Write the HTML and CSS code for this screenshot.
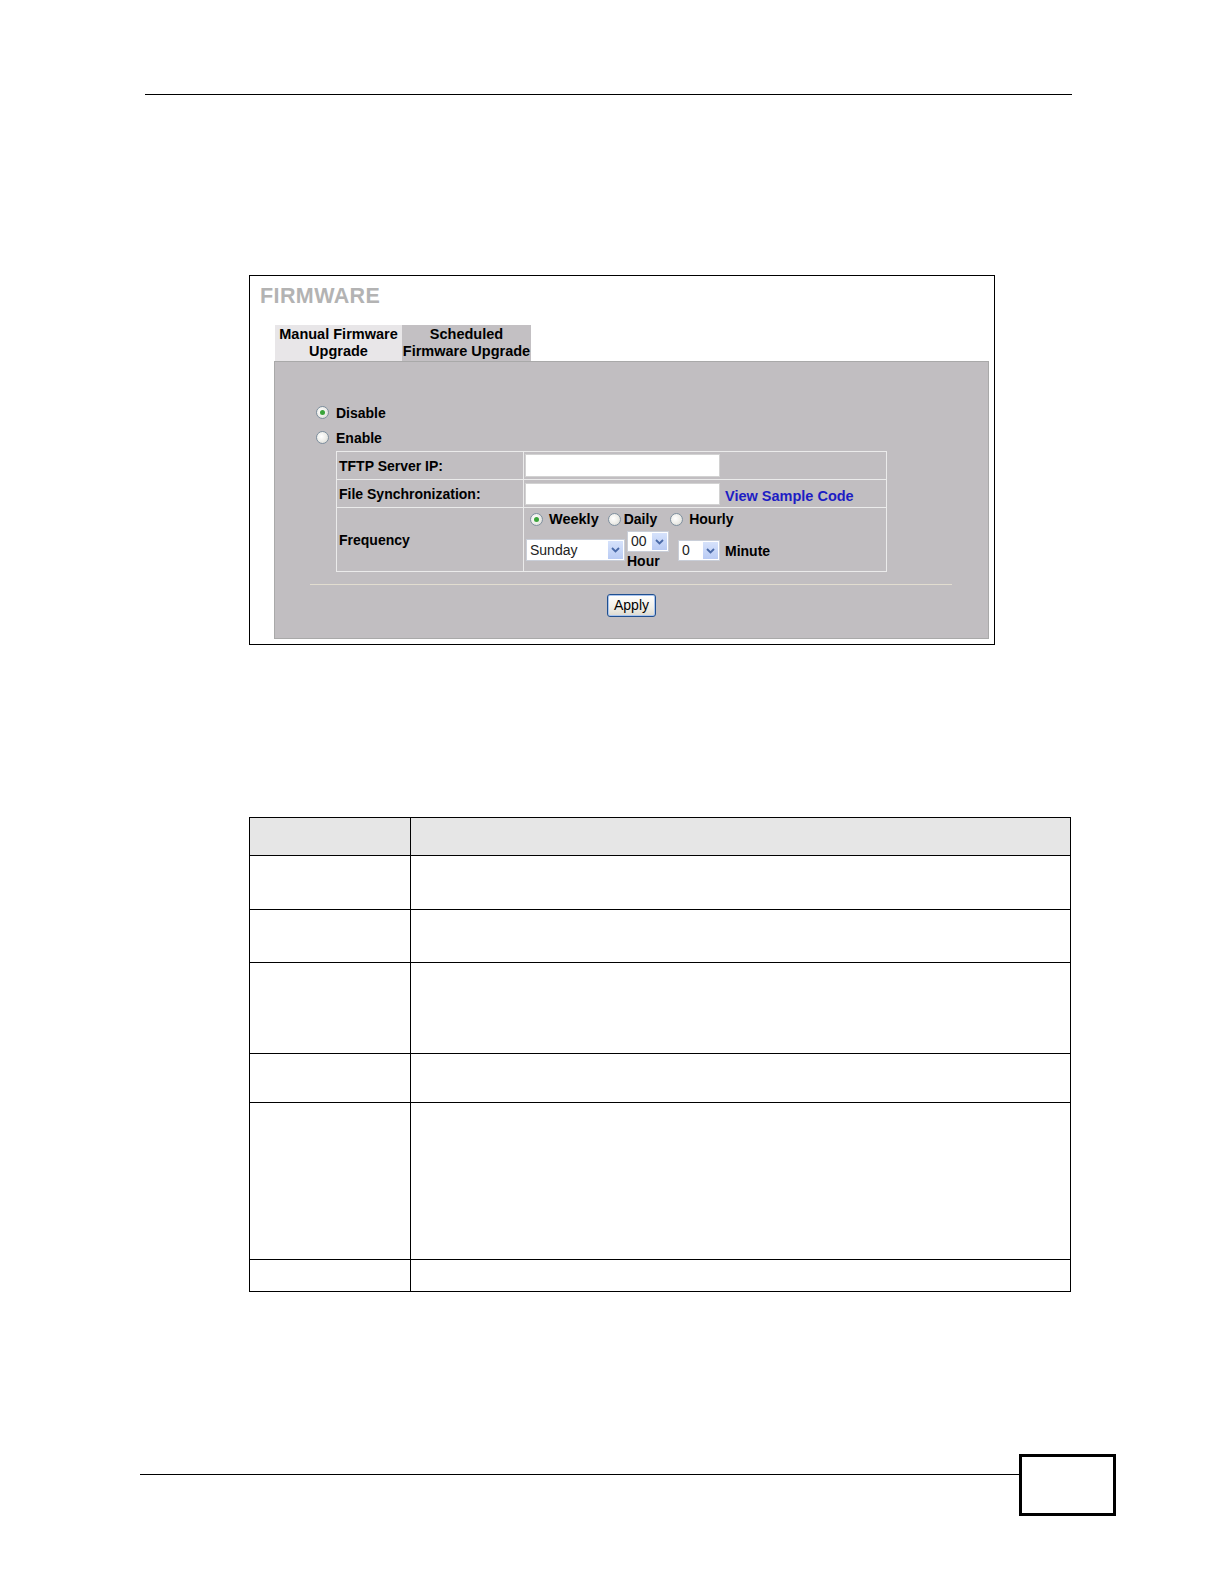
FILE: index.html
```html
<!DOCTYPE html>
<html>
<head>
<meta charset="utf-8">
<title>Firmware</title>
<link rel="stylesheet" href="styles.css">
</head>
<body>
<div class="page">
  <div class="top-rule"></div>

  <div class="shot">
    <div class="shot-title">FIRMWARE</div>
    <div class="tabs">
      <div class="tab tab-light">Manual Firmware<br>Upgrade</div>
      <div class="tab tab-dark">Scheduled<br>Firmware Upgrade</div>
    </div>
    <div class="panel">
      <div class="panel-body">
        <div class="radio-row"><span class="radio on"></span><span class="lbl">Disable</span></div>
        <div class="radio-row"><span class="radio"></span><span class="lbl">Enable</span></div>
        <table class="form">
          <tr class="r28">
            <td class="c1">TFTP Server IP:</td>
            <td class="c2"><div class="inp inp1"></div></td>
          </tr>
          <tr class="r28">
            <td class="c1">File Synchronization:</td>
            <td class="c2"><div class="inline"><div class="inp inp2"></div><span class="link">View Sample Code</span></div></td>
          </tr>
          <tr class="r64">
            <td class="c1">Frequency</td>
            <td class="c2 top">
              <div class="freq-radios">
                <span class="radio on"></span><span class="lbl w1">Weekly</span>
                <span class="radio"></span><span class="lbl w2">Daily</span>
                <span class="radio"></span><span class="lbl">Hourly</span>
              </div>
              <div class="freq-selects">
                <div class="sel sel-day">Sunday<span class="arr"><svg width="9" height="6" viewBox="0 0 9 6"><path d="M1 1 L4.5 4.5 L8 1" fill="none" stroke="#4a6aa8" stroke-width="1.8"/></svg></span></div>
                <div class="hour-group">
                  <div class="sel sel-small">00<span class="arr"><svg width="9" height="6" viewBox="0 0 9 6"><path d="M1 1 L4.5 4.5 L8 1" fill="none" stroke="#4a6aa8" stroke-width="1.8"/></svg></span></div>
                  <div class="lbl hour">Hour</div>
                </div>
                <div class="sel sel-small sel-min">0<span class="arr"><svg width="9" height="6" viewBox="0 0 9 6"><path d="M1 1 L4.5 4.5 L8 1" fill="none" stroke="#4a6aa8" stroke-width="1.8"/></svg></span></div>
                <div class="lbl minute">Minute</div>
              </div>
            </td>
          </tr>
        </table>
      </div>
      <div class="sep"></div>
      <div class="btn-row"><span class="btn">Apply</span></div>
    </div>
  </div>

  <table class="desc">
    <tr class="h38 head"><td class="d1"></td><td></td></tr>
    <tr class="h54"><td class="d1"></td><td></td></tr>
    <tr class="h53"><td class="d1"></td><td></td></tr>
    <tr class="h91"><td class="d1"></td><td></td></tr>
    <tr class="h49"><td class="d1"></td><td></td></tr>
    <tr class="h157"><td class="d1"></td><td></td></tr>
    <tr class="h32"><td class="d1"></td><td></td></tr>
  </table>

  <div class="footer">
    <div class="foot-line"></div>
    <div class="foot-box"></div>
  </div>
</div>
</body>
</html>
```

FILE: styles.css
```css
html, body {
  margin: 0;
  padding: 0;
  background: #fff;
}
body {
  font-family: "Liberation Sans", Arial, sans-serif;
  color: #000;
}
.page {
  display: flow-root;
  width: 1224px;
  padding-top: 94px;
}
.top-rule {
  margin-left: 145px;
  width: 927px;
  border-top: 1px solid #000;
}

/* screenshot box */
.shot {
  margin: 180px 0 0 249px;
  width: 744px;
  height: 368px;
  border: 1px solid #000;
}
.shot-title {
  padding: 8px 0 0 10px;
  font-size: 21.5px;
  line-height: 24px;
  font-weight: bold;
  color: #b3b3b3;
  letter-spacing: 0.4px;
}
.tabs {
  display: flex;
  margin: 17px 0 0 25px;
  height: 36px;
}
.tab {
  font-size: 14.5px;
  font-weight: bold;
  line-height: 17px;
  text-align: center;
  padding-top: 1px;
  box-sizing: border-box;
  height: 36px;
  white-space: nowrap;
}
.tab-light {
  width: 127px;
  background: #e8e6e8;
}
.tab-dark {
  width: 129px;
  background: #c3c0c3;
}
.panel {
  margin-left: 24px;
  width: 713px;
  height: 276px;
  border: 1px solid #a9a9a9;
  background: #c1bec1;
}
.panel-body {
  padding: 38px 0 0 41px;
}
.radio-row {
  display: flex;
  align-items: center;
  height: 25px;
  gap: 7px;
}
.lbl {
  font-size: 14px;
  font-weight: bold;
}
.radio {
  display: inline-block;
  position: relative;
  width: 13px;
  height: 13px;
  box-sizing: border-box;
  border-radius: 50%;
  border: 1px solid #7d8e9e;
  background: radial-gradient(circle at 40% 40%, #ffffff 0%, #eeeeea 50%, #d2d2cc 100%);
  flex: none;
}
.radio.on::after {
  content: "";
  position: absolute;
  left: 3px;
  top: 3px;
  width: 5px;
  height: 5px;
  border-radius: 50%;
  background: #3aa43a;
}

.form {
  margin: 1px 0 0 20px;
  width: 551px;
  border-collapse: collapse;
  table-layout: fixed;
}
.form td {
  border: 1px solid #ebebeb;
  padding: 0;
  font-size: 14px;
  font-weight: bold;
}
.form .c1 {
  width: 184px;
  padding-left: 2px;
  vertical-align: middle;
}
.form .c2 {
  padding-left: 1px;
  vertical-align: middle;
}
.form .c2.top {
  vertical-align: top;
}
.r28 { height: 28px; }
.r64 { height: 64px; }
.inp {
  width: 195px;
  box-sizing: border-box;
  background: #fff;
  border: 1px solid #d2d2d2;
}
.inp1 { height: 23px; }
.inp2 { height: 22px; }
.inline {
  display: flex;
  align-items: center;
  gap: 5px;
}
.inline .inp2 { margin-top: 1px; }
.link {
  color: #1d1dc4;
  font-size: 14.5px;
  font-weight: bold;
  margin-top: 4px;
}
.freq-radios {
  display: flex;
  align-items: center;
  height: 22px;
  padding-left: 5px;
}
.freq-radios .radio { margin-right: 6px; }
.freq-radios .lbl { margin-right: 9px; }
.freq-radios .w1 { margin-right: 9px; font-size: 14.5px; }
.freq-radios .w2 { margin-right: 13px; margin-left: -3px; }
.freq-selects {
  display: flex;
  align-items: flex-start;
  padding-left: 1px;
}
.sel {
  position: relative;
  box-sizing: border-box;
  height: 22px;
  background: #fff;
  border: 1px solid #c9ced8;
  font-size: 14px;
  font-weight: normal;
  line-height: 20px;
  padding-left: 3px;
}
.sel-day {
  width: 99px;
  margin-top: 9px;
  color: #222;
}
.sel-small {
  width: 42px;
  height: 21px;
  line-height: 19px;
  color: #222;
}
.arr {
  position: absolute;
  right: 1px;
  top: 1px;
  bottom: 1px;
  width: 15px;
  background: linear-gradient(#d6e2fb, #b9cbf4);
  display: flex;
  align-items: center;
  justify-content: center;
}
.hour-group {
  margin-left: 2px;
  margin-top: 1px;
}
.hour {
  line-height: 16px;
  margin-top: 1px;
}
.sel-min {
  margin-left: 9px;
  margin-top: 10px;
}
.minute {
  margin-left: 5px;
  margin-top: 13px;
}
.sep {
  margin: 12px 0 0 35px;
  width: 642px;
  height: 1px;
  background: #e2ddd0;
}
.btn-row {
  display: flex;
  justify-content: center;
  margin-top: 9px;
}
.btn {
  width: 49px;
  height: 23px;
  box-sizing: border-box;
  border: 1px solid #1f4f8f;
  border-radius: 3px;
  background: linear-gradient(#ffffff, #f0efe8 60%, #dcdad0);
  box-shadow: inset 0 0 0 1px #a9c4ee;
  font-size: 14px;
  line-height: 21px;
  text-align: center;
  color: #000;
}

/* description table */
.desc {
  margin: 172px 0 0 249px;
  width: 822px;
  border-collapse: collapse;
  table-layout: fixed;
}
.desc td {
  border: 1px solid #000;
  padding: 0;
}
.desc .d1 { width: 160px; }
.desc .head td { background: #e6e6e6; }
.h38 { height: 38px; }
.h54 { height: 54px; }
.h53 { height: 53px; }
.h91 { height: 91px; }
.h49 { height: 49px; }
.h157 { height: 157px; }
.h32 { height: 32px; }

.footer {
  display: flex;
  align-items: flex-start;
  margin: 162px 0 0 140px;
}
.foot-line {
  width: 879px;
  margin-top: 20px;
  border-top: 1px solid #000;
}
.foot-box {
  width: 97px;
  height: 62px;
  box-sizing: border-box;
  border: 3px solid #000;
}
```
